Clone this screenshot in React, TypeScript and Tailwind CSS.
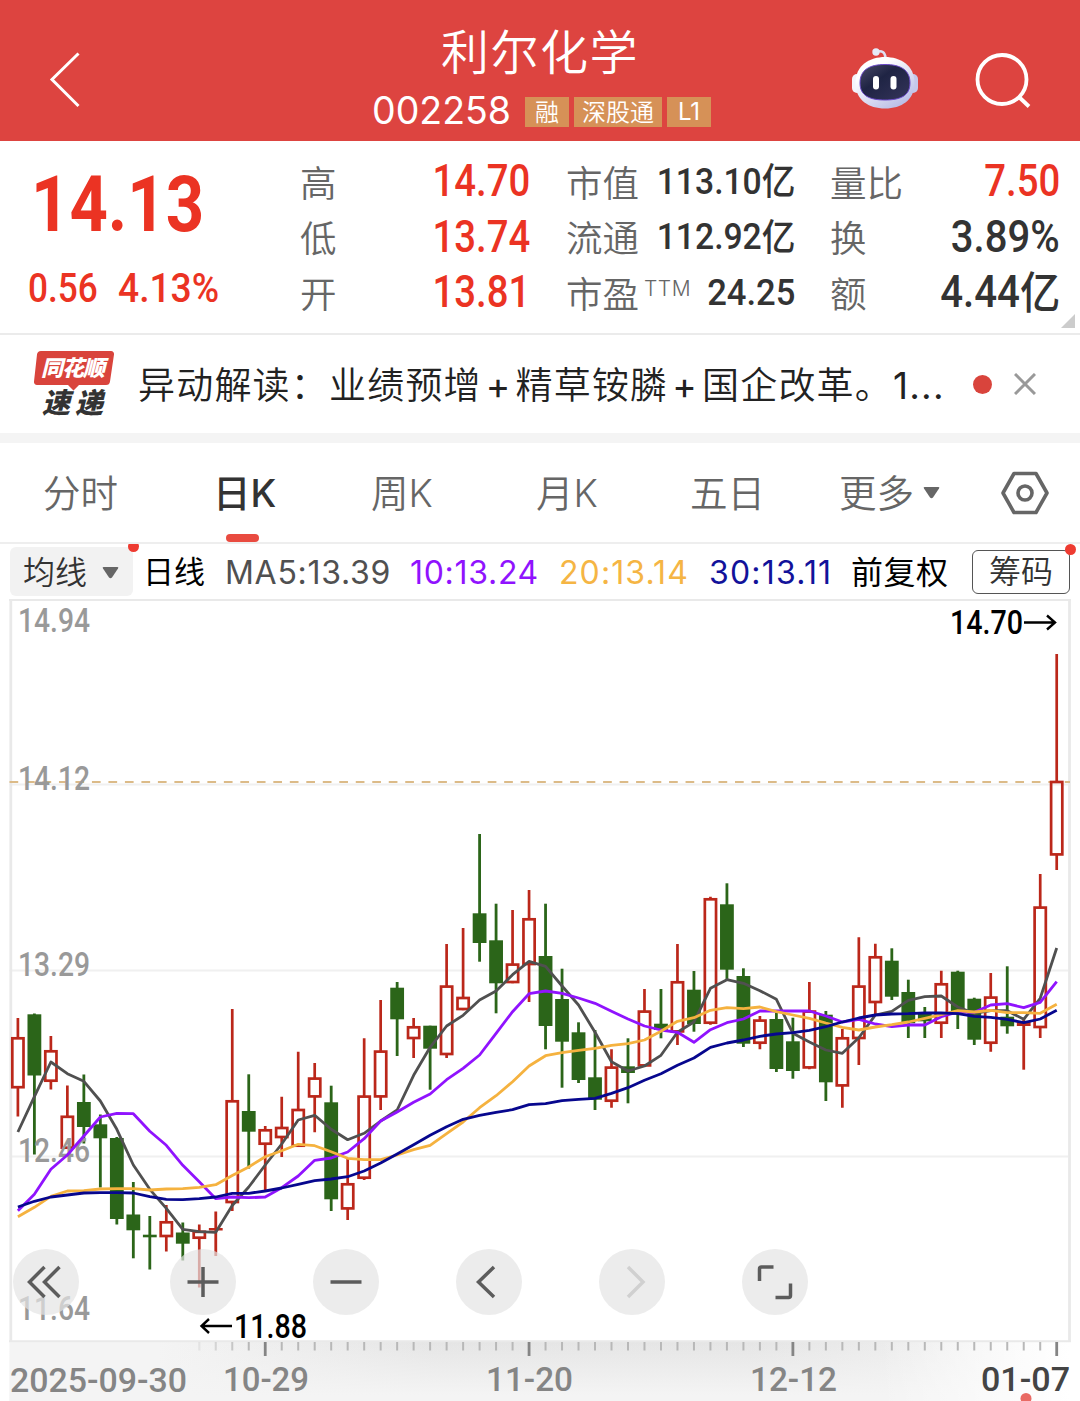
import { clsx } from "clsx";

const stats = [
  [
    { label: "高", value: "14.70", tone: "scale-x-[0.87] text-[#eb3323]" },
    { label: "低", value: "13.74", tone: "scale-x-[0.87] text-[#eb3323]" },
    { label: "开", value: "13.81", tone: "scale-x-[0.87] text-[#eb3323]" },
  ],
  [
    { label: "市值", value: "113.10", unit: "亿", tone: "scale-x-[0.91] text-[#333]" },
    { label: "流通", value: "112.92", unit: "亿", tone: "scale-x-[0.91] text-[#333]" },
    { label: "市盈", sup: "TTM", value: "24.25", tone: "scale-x-[0.935] text-[#333]" },
  ],
  [
    { label: "量比", value: "7.50", tone: "scale-x-[0.87] text-[#eb3323]" },
    { label: "换", value: "3.89%", tone: "scale-x-[0.91] text-[#333]" },
    { label: "额", value: "4.44", unit: "亿", tone: "scale-x-[0.915] text-[#333]" },
  ],
];

const statCols = ["w-[230px] ml-[300px]", "w-[229px] ml-[36px]", "w-[230px] ml-[35px]"];

// [kind, high, body top, body bottom, low] in chart units
type Candle = [string, number, number, number, number];

const candles: Candle[] = [
  ["r", 1018, 1037, 1088.5, 1116.5],
  ["g", 1013.5, 1014.3, 1075.5, 1154.5],
  ["r", 1036, 1050, 1082, 1089.5],
  ["r", 1085.5, 1115.5, 1149, 1149],
  ["g", 1074.5, 1102, 1127, 1143.5],
  ["g", 1114.5, 1124.3, 1138.3, 1187.5],
  ["g", 1137, 1138, 1219, 1224.5],
  ["g", 1182, 1214.5, 1230.3, 1258.3],
  ["g", 1216, 1234.7, 1237.3, 1269.5],
  ["r", 1205, 1221, 1237.3, 1251.5],
  ["g", 1222.5, 1232.5, 1243.7, 1260.5],
  ["r", 1224.5, 1230.5, 1239, 1287.5],
  ["r", 1211.5, 1228, 1230.5, 1256],
  ["r", 1009, 1100, 1203.3, 1211],
  ["g", 1074.3, 1111, 1131.7, 1168.5],
  ["r", 1126, 1129, 1145, 1191.7],
  ["r", 1096.7, 1126.7, 1138.3, 1157],
  ["r", 1051.7, 1108.7, 1147, 1147],
  ["r", 1063, 1077.3, 1097.7, 1132.3],
  ["g", 1085.7, 1102.3, 1199.3, 1211],
  ["r", 1158.3, 1183, 1209.7, 1220],
  ["r", 1038.3, 1095.3, 1179, 1180],
  ["r", 1000, 1050.3, 1097.7, 1110],
  ["g", 982, 987.7, 1019.3, 1056],
  ["r", 1018, 1026, 1039.3, 1058],
  ["g", 1025.7, 1025.7, 1048.7, 1089.7],
  ["r", 944, 985.3, 1055.3, 1058],
  ["r", 928, 996.7, 1010.3, 1010.3],
  ["g", 834, 913.3, 943, 961.7],
  ["g", 903.7, 940.3, 983.3, 1013.3],
  ["r", 910, 963.3, 983.3, 983.3],
  ["r", 890, 918, 965.3, 1002],
  ["g", 903.7, 956, 1026, 1049.3],
  ["g", 968.7, 999, 1041.7, 1087.7],
  ["g", 1022.3, 1032.3, 1080, 1083],
  ["g", 1030, 1077.3, 1099.7, 1110],
  ["r", 1049.3, 1066.3, 1102, 1107.7],
  ["g", 1038.3, 1066.3, 1073, 1103.3],
  ["r", 989, 1010.3, 1066.7, 1066.7],
  ["g", 989, 1023.7, 1030, 1038.3],
  ["r", 944, 981, 1032.7, 1045],
  ["g", 971, 989.7, 1024, 1031.7],
  ["r", 896.7, 898, 1024, 1024.7],
  ["g", 883.3, 904.3, 969.7, 980.7],
  ["g", 968.3, 976, 1043.7, 1047],
  ["r", 1016, 1019.3, 1044, 1049.3],
  ["g", 1012.7, 1019, 1069, 1072],
  ["g", 1017.7, 1041.3, 1071, 1078.7],
  ["r", 982, 1010.3, 1068.7, 1069.3],
  ["g", 1011, 1014.7, 1082.3, 1101],
  ["r", 1029, 1037, 1086.7, 1107.7],
  ["r", 937.3, 985.3, 1039.3, 1065],
  ["r", 943.7, 956, 1003.3, 1014],
  ["g", 948.3, 960.7, 996.7, 1000],
  ["g", 979.7, 992, 1023.3, 1038],
  ["g", 1007, 1014, 1021.3, 1038],
  ["r", 970.7, 983, 1024, 1038],
  ["g", 970.7, 971.7, 1013, 1029],
  ["g", 997.7, 998.7, 1039.7, 1045],
  ["r", 973, 996.3, 1044, 1051.7],
  ["g", 966.3, 1016.7, 1026.3, 1033.7],
  ["r", 1018, 1022, 1026, 1069.7],
  ["r", 874, 906.3, 1028.3, 1038],
  ["r", 654, 780.7, 855.7, 870],
];

const averages = [
  {
    stroke: "#505050",
    ys: [1132, 1096.7, 1062, 1073.7, 1081.3, 1101, 1129.3, 1165, 1189.3, 1208.3, 1229.3, 1231.7, 1232.3, 1205.5, 1187, 1165, 1144, 1120, 1115.3, 1129.3, 1139.7, 1133.3, 1121, 1110, 1075.3, 1047.3, 1026, 1015.3, 1000, 991, 974.7, 961.3, 966.3, 986, 1005, 1032.3, 1061.7, 1071, 1066, 1055.3, 1032.3, 1022, 988.3, 979.7, 983.3, 990.7, 999.3, 1033.3, 1042, 1050, 1053.3, 1037.7, 1015, 1011.3, 1000.3, 996.7, 996, 1007, 1013.3, 1010.7, 1010.7, 1019.3, 998.3, 948],
  },
  {
    stroke: "#9013fe",
    ys: [1210.7, 1194.3, 1169.3, 1155, 1136, 1117, 1113.3, 1113.7, 1131.3, 1145.3, 1165.3, 1181.7, 1198.7, 1197, 1197.7, 1197, 1187.7, 1176, 1160.3, 1158, 1152, 1138.7, 1121, 1112, 1102.3, 1094, 1079.7, 1068.3, 1055, 1033.3, 1011.7, 993.7, 991, 993.3, 998, 1003.3, 1011.3, 1019, 1026, 1030, 1032.3, 1042.3, 1029.7, 1022.7, 1019, 1011, 1011, 1011, 1011, 1016, 1022, 1019.3, 1024, 1026.7, 1025, 1025, 1016.7, 1012, 1012.3, 1005, 1003.7, 1007.7, 1002.3, 981.7],
  },
  {
    stroke: "#f5b23f",
    ys: [1216.7, 1207.3, 1196.3, 1191, 1190.7, 1189, 1188.7, 1188.7, 1190, 1189, 1188.7, 1187.3, 1184.7, 1175.5, 1167, 1156.7, 1150.7, 1144.3, 1145.7, 1151.7, 1158.3, 1159.7, 1159.7, 1155, 1149.7, 1145.3, 1133.7, 1122, 1107.7, 1095.7, 1081.7, 1066, 1055.7, 1052.7, 1050.3, 1048.3, 1045.3, 1043.7, 1040, 1031.3, 1021.3, 1017.7, 1010.3, 1007.7, 1008.7, 1007, 1011.7, 1015, 1018.3, 1023, 1027.3, 1030, 1027, 1024.7, 1022, 1018.3, 1014.7, 1010.7, 1012, 1010.3, 1012.7, 1012.7, 1013.3, 1004.3],
  },
  {
    stroke: "#07078e",
    ys: [1207, 1201.3, 1197, 1195, 1193, 1192.7, 1192.7, 1193, 1196.7, 1199.3, 1199.7, 1198.7, 1197, 1193.3, 1193.3, 1191, 1188, 1184.3, 1180.7, 1179, 1176.7, 1171, 1163, 1154, 1144.7, 1135.3, 1126.7, 1119.3, 1115.3, 1112.3, 1109.7, 1104.7, 1103.7, 1100.7, 1099.3, 1098.3, 1093.3, 1087.7, 1080.3, 1073.7, 1065.3, 1058, 1047.3, 1043, 1040, 1036.3, 1034, 1032.7, 1030.3, 1026.7, 1022, 1018, 1015, 1014, 1013.7, 1013, 1013, 1013.7, 1016.3, 1017.3, 1019.3, 1022.7, 1019, 1010.3],
  },
];

const priceLabels = [
  { text: "14.94", y: 632 },
  { text: "14.12", y: 790 },
  { text: "13.29", y: 976 },
  { text: "12.46", y: 1161.5 },
  { text: "11.64", y: 1319.5 },
];

const dateLabels = [
  { text: "2025-09-30", x: 10, y: 1391.5, w: 177 },
  { text: "10-29", x: 223, y: 1390.5, w: 86 },
  { text: "11-20", x: 486, y: 1390.5, w: 87 },
  { text: "12-12", x: 750, y: 1390.5, w: 87 },
];

const cx = (i: number) => 17.9 + i * 16.489;

const BackIcon = () => (
  <svg className="h-14 w-8" viewBox="0 0 32 56" fill="none" stroke="#fff" strokeWidth="3">
    <path d="M29.500 1.500 3 27.500 29.500 54" />
  </svg>
);

const RobotIcon = () => (
  <svg className="h-[62px] w-[68px]" viewBox="0 0 68 62">
    <defs>
      <linearGradient id="shell" x1="0" y1="0" x2="0.7" y2="1">
        <stop offset="0.3" stopColor="#fff" />
        <stop offset="1" stopColor="#b9bde6" />
      </linearGradient>
      <linearGradient id="visor" x1="0" y1="0" x2="1" y2="1">
        <stop offset="0" stopColor="#4a4a68" />
        <stop offset="0.4" stopColor="#1f2444" />
        <stop offset="1" stopColor="#34345a" />
      </linearGradient>
    </defs>
    <path d="M25 5c6-2 9 0 9.500 6" fill="none" stroke="#dfe1f4" strokeWidth="2.600" />
    <circle cx="25" cy="5" r="3.700" fill="#e6eaf8" />
    <rect x="1" y="27" width="10" height="19" rx="5" fill="#f4f4fb" />
    <rect x="57" y="27" width="10" height="19" rx="5" fill="#c5c8ea" />
    <path d="M34 10C19 10 4.500 18 4.500 36c0 17 13 25.500 29.500 25.500S63.500 53 63.500 36C63.500 18 49 10 34 10Z" fill="url(#shell)" />
    <path d="M34 17.500c-15 0-25 5-25 18.500 0 13 10 17 25 17s25-4 25-17c0-13.500-10-18.500-25-18.500Z" fill="url(#visor)" stroke="#6a48c8" strokeWidth="1" />
    <rect x="22" y="29" width="6" height="13.500" rx="3" fill="#fff" />
    <rect x="39.500" y="29" width="6" height="13.500" rx="3" fill="#fff" />
  </svg>
);

const SearchIcon = () => (
  <svg className="h-[58px] w-[58px]" viewBox="0 0 58 58" fill="none" stroke="#fff" strokeWidth="3.800">
    <circle cx="28" cy="28.500" r="24.500" />
    <path d="M45 46 55 55.500" />
  </svg>
);

const Header = () => (
  <header className="relative flex h-[141px] items-center bg-[#dd4440] text-white">
    <div className="ml-[49px] mt-[19px]">
      <BackIcon />
    </div>
    <div className="absolute inset-x-0 top-0 flex flex-col items-center">
      <h1 className="mt-[17px] h-[72px] text-[48px] leading-[72px] tracking-[1.500px] font-[350]">利尔化学</h1>
      <div className="mt-[6px] flex h-[32px] items-center gap-[5px] pl-[3px]">
        <span className="mr-[8px] w-[140px] text-[37.500px] leading-[32px] whitespace-nowrap">002258</span>
        <span className="mt-[1px] flex h-[30px] w-[44px] items-center justify-center bg-[#d69157] pt-[2px] text-[24px] font-[350]">融</span>
        <span className="mt-[1px] flex h-[30px] w-[88px] items-center justify-center bg-[#d69157] pt-[2px] text-[24px] font-[350]">深股通</span>
        <span className="mt-[1px] flex h-[30px] w-[44px] items-center justify-center bg-[#d69157] text-[24px]">L1</span>
      </div>
    </div>
    <div className="ml-auto mt-[15px] mr-[55px]">
      <RobotIcon />
    </div>
    <div className="mt-[19px] mr-[48px]">
      <SearchIcon />
    </div>
  </header>
);

const Quote = () => (
  <section className="relative flex h-[194px] border-b-2 border-[#ebebeb]">
    <div className="absolute top-0 left-0 font-[Roboto] font-bold text-[#eb3323]">
      <div className="mt-[22px] ml-[31px] h-[84px] origin-left scale-x-[0.87] text-[77px] leading-[84px]">14.13</div>
      <div className="mt-[20px] ml-[28px] flex h-[44px] text-[40px] leading-[44px] font-medium">
        <span className="w-[90px] origin-left scale-x-[0.88]">0.56</span>
        <span className="origin-left scale-x-[0.93]">4.13%</span>
      </div>
    </div>
    {stats.map((col, c) => (
      <div key={c} className={clsx("flex shrink-0 flex-col pt-[13px]", statCols[c])}>
        {col.map((s) => (
          <div key={s.label} className="flex h-[55.500px] items-center justify-between">
            <span className="flex pt-[5px] text-[36.500px] font-[350] text-[#666]">
              {s.label}
              {s.sup && <sup className="top-0 ml-[5px] mt-[7px] text-[21px] leading-[28px] tracking-[0.500px]">{s.sup}</sup>}
            </span>
            <span
              className={clsx(
                "flex origin-right items-center pb-[1px] font-[Roboto,'Noto_Sans_CJK_SC'] font-medium whitespace-nowrap",
                c === 1 ? "text-[37px]" : "text-[44px]",
                s.tone
              )}
            >
              {s.value}
              {s.unit && <span className="pt-[3px]">{s.unit}</span>}
            </span>
          </div>
        ))}
      </div>
    ))}
    <svg className="absolute right-[5px] bottom-[5px] h-[14px] w-[14px]" viewBox="0 0 14 14">
      <path d="M14 0v14H0Z" fill="#ccc" />
    </svg>
  </section>
);

const NewsLogo = () => (
  <svg className="h-[76px] w-[82px] shrink-0" viewBox="0 -4 82 76">
    <path d="M8 1h70a3 3 0 0 1 3 3.500l-4 27a4 4 0 0 1-4 3.500H46l-5.500 5.500L35 35H4a3 3 0 0 1-3-3.500l3-27A4 4 0 0 1 8 1Z" fill="#d9443c" />
    <g className="font-['Noto_Sans_CJK_SC']" fontWeight="900" fontStyle="italic">
      <text x="8" y="26" fontSize="22" fill="#fff" textLength="64">同花顺</text>
      <text x="9" y="62.500" fontSize="28" fill="#333" textLength="61">速递</text>
    </g>
  </svg>
);

const News = () => (
  <section className="flex h-[98px] items-center">
    <div className="ml-[33px]">
      <NewsLogo />
    </div>
    <p className="ml-[23px] w-[820px] pt-[3px] text-[37px] font-[350] tracking-[1.200px] whitespace-nowrap text-[#222]">
      异动解读：业绩预增<span className="mx-[4px] font-normal">+</span>精草铵膦<span className="mx-[4px] font-normal">+</span>国企改革。<span className="font-normal">1...</span>
    </p>
    <span className="ml-[15px] h-[19px] w-[19px] rounded-full bg-[#d9443c]" />
    <svg className="ml-[22px] h-[22px] w-[22px]" viewBox="0 0 22 22" fill="none" stroke="#999" strokeWidth="3">
      <path d="M1 1 21 21M21 1 1 21" />
    </svg>
  </section>
);

const tabs = [
  { text: "分时", place: "ml-[43px] w-[170px] font-[350]" },
  { text: "日K", place: "w-[158px] font-medium text-[#333]" },
  { text: "周K", place: "w-[165px] font-[350]" },
  { text: "月K", place: "w-[154px] font-[350]" },
  { text: "五日", place: "w-[149px] font-[350]" },
  { text: "更多", place: "w-[76px] font-[350]" },
];

const Tabs = () => (
  <nav className="flex h-[111px] items-center border-t-[10px] border-b-2 border-t-[#f4f4f4] border-b-[#eee] text-[37.500px] text-[#666]">
    {tabs.map((t) => (
      <div key={t.text} className={clsx("relative shrink-0 pt-[3px] whitespace-nowrap", t.place)}>
        {t.text}
        {t.text === "日K" && <span className="absolute -bottom-[20px] left-[13px] h-[8px] w-[33px] rounded-full bg-[#e94b40]" />}
      </div>
    ))}
    <svg className="ml-[8px] h-[12px] w-[17px] shrink-0" viewBox="0 0 17 12">
      <path d="M1.500 0h14q1.500 0 .5 1.500l-6 9q-1.500 1.500-3 0l-6-9Q0 0 1.500 0Z" fill="#666" />
    </svg>
    <svg className="ml-[61px] h-[44px] w-[48px] shrink-0" viewBox="0 0 48 44" fill="none" stroke="#666" strokeWidth="3.600" strokeLinejoin="round">
      <path d="M13 2.500h22L46 22 35 41.500H13L2 22Z" />
      <circle cx="24" cy="22" r="7" />
    </svg>
  </nav>
);

const AverageBar = () => (
  <div className="relative flex h-[55px] items-center overflow-hidden text-[32px] whitespace-nowrap text-black">
    <div className="ml-[10px] flex h-[49px] w-[123px] shrink-0 items-center rounded-md bg-[#f2f2f2] pt-[2px] pl-[13px] font-[350] text-[#333]">
      均线
      <svg className="ml-[15px] h-[12px] w-[17px]" viewBox="0 0 17 12">
        <path d="M1.500 0h14q1.500 0 .5 1.500l-6 9q-1.500 1.500-3 0l-6-9Q0 0 1.500 0Z" fill="#666" />
      </svg>
    </div>
    <span className="absolute -top-[3px] left-[128px] h-[11px] w-[11px] rounded-full bg-[#ee3b31]" />
    <span className="ml-[10px] w-[82px] shrink-0 pt-[2px] text-[31px]">日线</span>
    <span className="w-[185px] shrink-0 pt-[2px] tracking-[0.700px] text-[#505050]">MA5:13.39</span>
    <span className="w-[149px] shrink-0 pt-[2px] tracking-[0.700px] text-[#9013fe]">10:13.24</span>
    <span className="w-[150px] shrink-0 pt-[2px] tracking-[1.100px] text-[#f5b544]">20:13.14</span>
    <span className="w-[142px] shrink-0 pt-[2px] tracking-[1.200px] text-[#12129a]">30:13.11</span>
    <span className="w-[121px] shrink-0 pt-[2px] tracking-[0.500px]">前复权</span>
    <span className="flex h-[44px] w-[98px] shrink-0 items-center justify-center rounded-md border-[1.500px] border-[#555] pt-[1px] font-[350] text-[#333]">筹码</span>
    <span className="absolute top-0 right-[4px] h-[11px] w-[11px] rounded-full bg-[#ee3b31]" />
  </div>
);

const Chart = () => (
  <svg className="block h-[802px] w-[1080px] font-[Roboto]" viewBox="0 599 1080 802" fill="none">
    <defs>
      <linearGradient id="axisX" x1="0" x2="1" y1="0" y2="0">
        <stop offset="0.14" stopColor="#d9d9d9" stopOpacity="0" />
        <stop offset="0.4" stopColor="#d9d9d9" stopOpacity="0.55" />
        <stop offset="0.7" stopColor="#d9d9d9" stopOpacity="0.55" />
        <stop offset="1" stopColor="#d9d9d9" stopOpacity="0" />
      </linearGradient>
      <linearGradient id="axisY" x1="0" x2="0" y1="0" y2="1">
        <stop offset="0" stopColor="#f4f4f4" stopOpacity="0" />
        <stop offset="0.9" stopColor="#f4f4f4" stopOpacity="1" />
      </linearGradient>
      <linearGradient id="axisEnd" x1="0" x2="1" y1="0" y2="0">
        <stop offset="0" stopColor="#fff" stopOpacity="0" />
        <stop offset="1" stopColor="#fff" />
      </linearGradient>
    </defs>

    <rect x="9.500" y="1342" width="1060" height="59" fill="#f4f4f4" />
    <rect x="9.500" y="1342" width="1060" height="59" fill="url(#axisX)" />
    <rect x="9.500" y="1342" width="1060" height="59" fill="url(#axisY)" />
    <rect x="880" y="1342" width="190" height="59" fill="url(#axisEnd)" />

    <path d="M9.500 784.500H1068M9.500 970.500H1068M9.500 1156.500H1068" stroke="#f0f0f0" strokeWidth="2" />
    <path d="M9 600H1071M9 1341.300H1071" stroke="#e9e9e9" strokeWidth="2" />
    <path d="M10.800 599V1342M1069.500 599V1342" stroke="#e9e9e9" strokeWidth="2.800" />
    <path d="M9.500 782H1070" stroke="#dcbb88" strokeWidth="2" strokeDasharray="8.700 7.789" />

    {candles.map(([kind, high, top, bottom, low], i) => {
      const x = cx(i);
      if (kind === "g" || bottom - top < 5) {
        const fill = kind === "g" ? "#2b6519" : "#bb271a";
        return (
          <g key={i} fill={fill}>
            <rect x={x - 1.400} y={high} width="2.800" height={low - high} />
            <rect x={x - 6.900} y={top} width="13.800" height={bottom - top} />
          </g>
        );
      }
      return (
        <g key={i} stroke="#bb271a" strokeWidth="2.700">
          <path d={`M${x} ${high}V${top + 1}M${x} ${bottom - 1}V${low}`} />
          <rect x={x - 5.600} y={top + 1.300} width="11.200" height={bottom - top - 2.600} />
        </g>
      );
    })}

    <g fill="#999" fontSize="33" fontWeight="500">
      {priceLabels.map((l) => (
        <text key={l.text} x="18" y={l.y} textLength="72" lengthAdjust="spacingAndGlyphs">{l.text}</text>
      ))}
    </g>

    {averages.map((a) => (
      <polyline key={a.stroke} points={a.ys.map((y, i) => `${cx(i)},${y}`).join(" ")} stroke={a.stroke} strokeWidth="2.800" strokeLinejoin="round" />
    ))}

    <g fill="#000" fontSize="33" fontWeight="500">
      <text x="950" y="634" textLength="73" lengthAdjust="spacingAndGlyphs">14.70</text>
      <text x="234" y="1338" textLength="73" lengthAdjust="spacingAndGlyphs">11.88</text>
    </g>
    <path d="M1024 622.500H1055M1047 615.500 1055 622.500 1047 629.500M232 1326H202M209 1319 201.500 1326 209 1333" stroke="#000" strokeWidth="2.400" />

    {candles.map((_, i) => {
      if (i < 11) return null;
      const major = i % 16 === 15;
      return (
        <path key={i} d={`M${cx(i)} 1342V${major ? 1356 : 1350.500}`} stroke={major ? "#858585" : "#b8b8b8"} strokeWidth={major ? 2.800 : 2} opacity={Math.min(1, (i - 10) * 0.25)} />
      );
    })}

    <g fill="#858585" fontSize="33" fontWeight="500">
      {dateLabels.map((d) => (
        <text key={d.text} x={d.x} y={d.y} textLength={d.w} lengthAdjust="spacingAndGlyphs">{d.text}</text>
      ))}
      <text x="981" y="1390.500" fill="#444" textLength="89" lengthAdjust="spacingAndGlyphs">01-07</text>
    </g>
    <circle cx="1026" cy="1398.500" r="5.500" fill="#e96a64" />
  </svg>
);

const controls = [
  { d: "M31.500 18 16.500 33 31.500 48M46.500 18 31.500 33 46.500 48", place: "mr-[91px]" },
  { d: "M17.500 33H48.500M33 18V48", place: "mr-[77px]" },
  { d: "M17.500 33H48.500", place: "mr-[77px]" },
  { d: "M38 18 22.500 33 38 48", place: "mr-[77px]" },
  { d: "M29 18 44 33 29 48", place: "mr-[77px]", faded: true },
  { d: "M17.500 32V20Q17.500 18 19.500 18H31.500M33.500 48.500H46.500Q48.500 48.500 48.500 46.500V34.500", place: "" },
];

const ChartControls = () => (
  <div className="absolute top-[650px] left-[13px] flex">
    {controls.map((c, i) => (
      <button key={i} className={clsx("h-[66px] w-[66px] rounded-full bg-[#e4e4e4]/70", c.place)}>
        <svg className="h-[66px] w-[66px]" viewBox="0 0 66 66" fill="none" stroke={c.faded ? "#d0d0d0" : "#5c5c5c"} strokeWidth="3.500">
          <path d={c.d} />
        </svg>
      </button>
    ))}
  </div>
);

const App = () => (
  <main className="h-[1401px] w-[1080px] overflow-hidden bg-white font-['Inter','Noto_Sans_CJK_SC',sans-serif]">
    <Header />
    <Quote />
    <News />
    <Tabs />
    <AverageBar />
    <div className="relative">
      <Chart />
      <ChartControls />
    </div>
  </main>
);

export default App;
